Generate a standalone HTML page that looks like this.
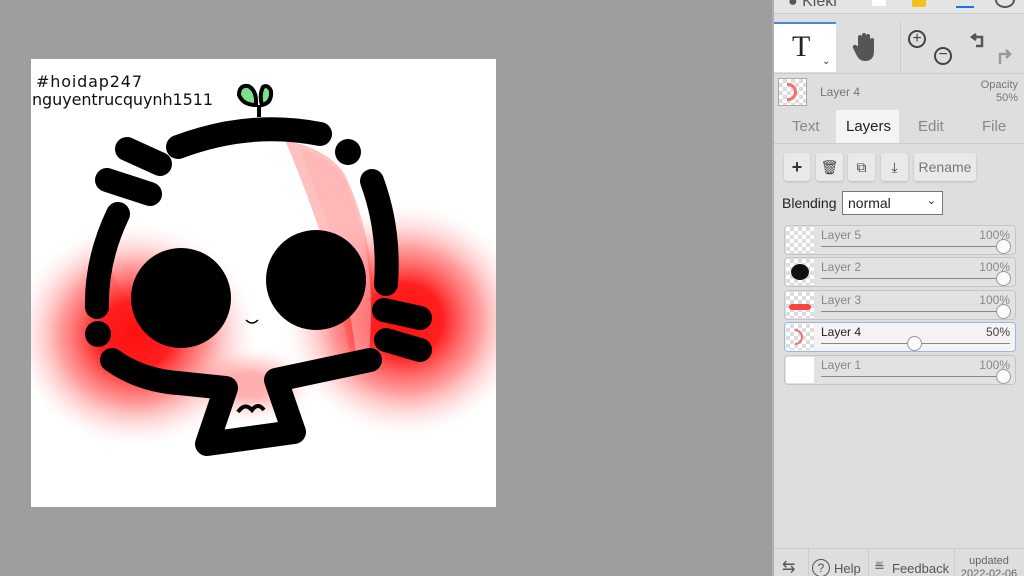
<!DOCTYPE html>
<html><head><meta charset="utf-8"><style>
*{margin:0;padding:0;box-sizing:border-box}
body{width:1024px;height:576px;overflow:hidden;background:#9e9e9e;font-family:"Liberation Sans",Arial,sans-serif;position:relative}
.a{position:absolute}
#side{left:772px;top:0;width:252px;height:576px;background:#dedede;border-left:2px solid #b0b0b0;overflow:hidden}
.btn{position:absolute;top:153px;height:28px;background:#e9e9e9;border-radius:3px;box-shadow:0 1px 2px #bbb;color:#777;font-size:14px;text-align:center;line-height:28px}
.layer{position:absolute;left:10px;width:232px;height:30px;background:#e2e2e2;border:1px solid #c4c4c4;border-radius:4px}
.layer .th{position:absolute;left:1px;top:1px;width:28px;height:26px;background:
 repeating-conic-gradient(#ddd 0 25%,#fff 0 50%) 0 0/8px 8px}
.layer .n{position:absolute;left:36px;top:2px;font-size:12px;color:#888}
.layer .p{position:absolute;right:5px;top:2px;font-size:12px;color:#888}
.layer .tr{position:absolute;left:36px;right:5px;top:20px;height:1px;background:#888}
.layer .k{position:absolute;top:13px;width:15px;height:15px;border-radius:50%;background:#fafafa;border:1px solid #999}
</style></head><body>
<svg class="a" style="left:0;top:0" width="772" height="576" viewBox="0 0 772 576">
<defs>
<radialGradient id="r" cx=".5" cy=".5" r=".5"><stop offset="0" stop-color="#ff1010"/><stop offset=".3" stop-color="#ff2020"/><stop offset=".6" stop-color="#ff5a5a" stop-opacity=".6"/><stop offset=".85" stop-color="#ffb0b0" stop-opacity=".2"/><stop offset="1" stop-color="#fff" stop-opacity="0"/></radialGradient>
<clipPath id="cp"><rect x="31" y="59" width="465" height="448"/></clipPath>
</defs>
<rect x="31" y="59" width="465" height="448" fill="#fff"/>
<g clip-path="url(#cp)">
<path d="M285 140 Q330 150 345 175 Q385 260 370 370 L350 360 Q340 270 285 140Z" fill="#ffc0c0"/>
<path d="M105 260 L160 360 L120 360Z" fill="#ff9090" opacity=".5"/>
<ellipse cx="135" cy="335" rx="125" ry="115" fill="url(#r)"/>
<ellipse cx="405" cy="320" rx="125" ry="120" fill="url(#r)"/>
<ellipse cx="250" cy="385" rx="70" ry="40" fill="url(#r)" opacity=".35"/>
<path d="M300 150 Q335 160 345 180 Q380 260 368 360 L356 355 Q345 260 300 150Z" fill="#ffb0b0" opacity=".6"/>
</g>
<g stroke="#000" stroke-width="24" stroke-linecap="round" stroke-linejoin="round" fill="none">
<path d="M178 147 Q250 120 320 134"/>
<path d="M127 149 L160 164"/>
<path d="M107 180 L150 194"/>
<path d="M118 214 Q96 260 97 307"/>
<path d="M372 181 Q390 230 386 284"/>
<path d="M384 310 L420 318"/>
<path d="M386 340 L420 350"/>
<path d="M112 360 Q140 380 178 383 L226 388 L207 444 L294 432 L276 380 L370 360"/>
</g>
<circle cx="348" cy="152" r="13"/>
<circle cx="98" cy="334" r="13"/>
<circle cx="181" cy="298" r="50"/>
<circle cx="316" cy="280" r="50"/>
<path d="M246 320 Q252 326 258 320" stroke="#000" stroke-width="1.5" fill="none"/>
<path d="M238 412 Q245 402 252 410 Q258 402 264 410" stroke="#000" stroke-width="4" fill="none"/>
<path d="M259 117 L259 105" stroke="#000" stroke-width="4"/>
<path d="M256 105 Q243 105 239 95 Q239 85 248 86 Q257 90 256 105Z" fill="#7de08c" stroke="#000" stroke-width="4"/>
<path d="M262 105 Q272 103 271 91 Q268 84 263 87 Q259 95 262 105Z" fill="#7de08c" stroke="#000" stroke-width="4"/>
<text x="36" y="87" font-family="'Comic Sans MS','DejaVu Sans',sans-serif" font-size="16" fill="#111" textLength="106">#hoidap247</text>
<text x="32" y="105" font-family="'Comic Sans MS','DejaVu Sans',sans-serif" font-size="16" fill="#111" textLength="181">nguyentrucquynh1511</text>
</svg>
<div id="side" class="a">
 <div class="a" style="left:0;top:0;width:250px;height:14px;background:#e4e4e4;border-bottom:1px solid #ccc"></div>
 <div class="a" style="left:14px;top:-7px;font-size:16px;color:#555">● Kleki</div>
 <div class="a" style="left:98px;top:0;width:14px;height:6px;background:#fff"></div>
 <div class="a" style="left:138px;top:0;width:14px;height:7px;background:#f2c21b;border-radius:0 0 2px 2px"></div>
 <div class="a" style="left:182px;top:6px;width:18px;height:2px;background:#1a73e8"></div>
 <div class="a" style="left:221px;top:-8px;width:20px;height:16px;border:2px solid #555;border-radius:50%"></div>
 <div class="a" style="left:0;top:22px;width:62px;height:50px;background:#fff;border-top:2px solid #4a86d8"></div>
 <div class="a" style="left:18px;top:30px;font-family:'Liberation Serif',serif;font-size:30px;color:#222">T</div>
 <div class="a" style="left:48px;top:56px;font-size:10px;color:#333">⌄</div>
 <svg class="a" style="left:78px;top:32px" width="28" height="30" viewBox="0 0 28 30"><path d="M6 14 V5 a2 2 0 0 1 4 0 V12 V3 a2 2 0 0 1 4 0 V12 V4 a2 2 0 0 1 4 0 V13 V8 a2 2 0 0 1 4 0 V19 Q22 29 13 29 Q7 29 4 22 L1 16 a2 2 0 0 1 4 -2Z" fill="#555"/></svg>
 <div class="a" style="left:126px;top:22px;width:1px;height:50px;background:#ccc"></div>
 <div class="a" style="left:134px;top:30px;width:18px;height:18px;border:2px solid #444;border-radius:50%;text-align:center;line-height:13px;font-size:16px;color:#444">+</div>
 <div class="a" style="left:160px;top:47px;width:18px;height:18px;border:2px solid #444;border-radius:50%;text-align:center;line-height:12px;font-size:16px;color:#444">−</div>
 <svg class="a" style="left:196px;top:28px" width="50" height="40" viewBox="0 0 50 40"><path d="M6 6 L2 9 L6 12 M2 9 H12 V18 H6" stroke="#555" stroke-width="2.5" fill="none"/><path d="M30 36 V26 H40 M36 22 L40 26 L36 30" stroke="#999" stroke-width="2.5" fill="none"/></svg>
 <div class="a" style="left:0;top:73px;width:250px;height:1px;background:#ccc"></div>
 <div class="a" style="left:4px;top:78px;width:29px;height:28px;border:1px solid #aaa;background:repeating-conic-gradient(#ddd 0 25%,#fff 0 50%) 0 0/8px 8px"></div>
 <div class="a" style="left:13px;top:83px;width:10px;height:18px;border:3px solid #f07070;border-left:none;border-radius:0 10px 10px 0"></div>
 <div class="a" style="left:46px;top:85px;font-size:12px;color:#777">Layer 4</div>
 <div class="a" style="left:200px;top:79px;font-size:11px;color:#777;text-align:right;width:44px;line-height:13px">Opacity<br>50%</div>
 <div class="a" style="left:62px;top:110px;width:63px;height:34px;background:#f4f4f4"></div>
 <div class="a" style="left:18px;top:118px;font-size:15px;color:#888">Text</div>
 <div class="a" style="left:72px;top:118px;font-size:15px;color:#222">Layers</div>
 <div class="a" style="left:144px;top:118px;font-size:15px;color:#888">Edit</div>
 <div class="a" style="left:208px;top:118px;font-size:15px;color:#888">File</div>
 <div class="a" style="left:0;top:143px;width:250px;height:1px;background:#ccc"></div>
 <div class="btn" style="left:10px;width:26px;font-size:18px;color:#333;font-weight:bold">+</div>
 <div class="btn" style="left:42px;width:27px;color:#444">🗑</div>
 <div class="btn" style="left:74px;width:27px;color:#444">⧉</div>
 <div class="btn" style="left:107px;width:27px;color:#444">⤓</div>
 <div class="btn" style="left:140px;width:62px">Rename</div>
 <div class="a" style="left:8px;top:195px;font-size:14px;color:#222">Blending</div>
 <div class="a" style="left:68px;top:191px;width:101px;height:24px;background:#fff;border:1px solid #777;font-size:14px;color:#222;padding:3px 5px">normal<span style="position:absolute;right:6px;top:2px;font-size:11px">⌄</span></div>
 <div class="layer" style="top:225px"><div class="th"></div><div class="n">Layer 5</div><div class="p">100%</div><div class="tr"></div><div class="k" style="right:4px"></div></div>
 <div class="layer" style="top:257px"><div class="th"></div><div class="a" style="left:6px;top:6px;width:18px;height:16px;background:#111;border-radius:50%"></div><div class="n">Layer 2</div><div class="p">100%</div><div class="tr"></div><div class="k" style="right:4px"></div></div>
 <div class="layer" style="top:290px"><div class="th"></div><div class="a" style="left:4px;top:13px;width:22px;height:6px;background:#ff4040;border-radius:3px"></div><div class="n">Layer 3</div><div class="p">100%</div><div class="tr"></div><div class="k" style="right:4px"></div></div>
 <div class="layer" style="top:322px;background:#f4f4f4;border-color:#9cb6e0"><div class="th"></div><div class="a" style="left:10px;top:6px;width:8px;height:16px;border:2px solid #f07070;border-left:none;border-radius:0 8px 8px 0"></div><div class="n" style="color:#222">Layer 4</div><div class="p" style="color:#444">50%</div><div class="tr"></div><div class="k" style="left:122px"></div></div>
 <div class="layer" style="top:355px"><div class="th" style="background:#fff"></div><div class="n">Layer 1</div><div class="p">100%</div><div class="tr"></div><div class="k" style="right:4px"></div></div>
 <div class="a" style="left:0;top:548px;width:250px;height:1px;background:#ccc"></div>
 <div class="a" style="left:8px;top:557px;font-size:16px;color:#555">⇆</div>
 <div class="a" style="left:34px;top:549px;width:1px;height:27px;background:#ccc"></div>
 <div class="a" style="left:38px;top:559px;width:18px;height:18px;border:1.5px solid #555;border-radius:50%;font-size:12px;text-align:center;line-height:16px;color:#555">?</div>
 <div class="a" style="left:60px;top:561px;font-size:13px;color:#555">Help</div>
 <div class="a" style="left:94px;top:549px;width:1px;height:27px;background:#ccc"></div>
 <div class="a" style="left:100px;top:559px;font-size:13px;color:#555">≝</div>
 <div class="a" style="left:118px;top:561px;font-size:13px;color:#555">Feedback</div>
 <div class="a" style="left:180px;top:549px;width:1px;height:27px;background:#ccc"></div>
 <div class="a" style="left:185px;top:555px;font-size:11px;color:#666;line-height:13px;text-align:center;width:60px">updated<br>2022-02-06</div>
</div>
</body></html>
